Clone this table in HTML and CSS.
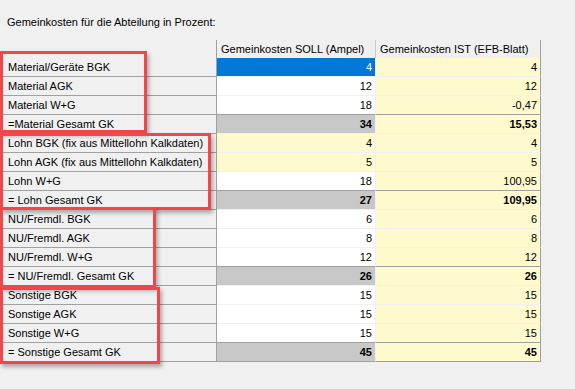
FILE: index.html
```html
<!DOCTYPE html>
<html>
<head>
  <meta charset="UTF-8">
  <title>Gemeinkosten</title>
  <link rel="stylesheet" href="styles.css">
</head>
<body>
  <p class="caption">Gemeinkosten für die Abteilung in Prozent:</p>

  <div class="grid">
    <div class="corner"></div>
    <div class="colhead">Gemeinkosten SOLL (Ampel)</div>
    <div class="colhead last">Gemeinkosten IST (EFB-Blatt)</div>

    <div class="rowhead">Material/Geräte BGK</div>
    <div class="cell selected">4</div>
    <div class="cell ist">4</div>
    <div class="rowhead">Material AGK</div>
    <div class="cell">12</div>
    <div class="cell ist">12</div>
    <div class="rowhead">Material W+G</div>
    <div class="cell pre">18</div>
    <div class="cell ist pre">-0,47</div>
    <div class="rowhead">=Material Gesamt GK</div>
    <div class="cell sum">34</div>
    <div class="cell ist sum">15,53</div>

    <div class="rowhead">Lohn BGK (fix aus Mittellohn Kalkdaten)</div>
    <div class="cell fixed">4</div>
    <div class="cell ist">4</div>
    <div class="rowhead">Lohn AGK (fix aus Mittellohn Kalkdaten)</div>
    <div class="cell fixed">5</div>
    <div class="cell ist">5</div>
    <div class="rowhead">Lohn W+G</div>
    <div class="cell pre">18</div>
    <div class="cell ist pre">100,95</div>
    <div class="rowhead">= Lohn Gesamt GK</div>
    <div class="cell sum">27</div>
    <div class="cell ist sum">109,95</div>

    <div class="rowhead">NU/Fremdl. BGK</div>
    <div class="cell">6</div>
    <div class="cell ist">6</div>
    <div class="rowhead">NU/Fremdl. AGK</div>
    <div class="cell">8</div>
    <div class="cell ist">8</div>
    <div class="rowhead">NU/Fremdl. W+G</div>
    <div class="cell pre">12</div>
    <div class="cell ist pre">12</div>
    <div class="rowhead">= NU/Fremdl. Gesamt GK</div>
    <div class="cell sum">26</div>
    <div class="cell ist sum">26</div>

    <div class="rowhead">Sonstige BGK</div>
    <div class="cell">15</div>
    <div class="cell ist">15</div>
    <div class="rowhead">Sonstige AGK</div>
    <div class="cell">15</div>
    <div class="cell ist">15</div>
    <div class="rowhead">Sonstige W+G</div>
    <div class="cell pre">15</div>
    <div class="cell ist pre">15</div>
    <div class="rowhead bottom">= Sonstige Gesamt GK</div>
    <div class="cell sum bottom">45</div>
    <div class="cell ist sum bottom">45</div>
  </div>

  <!-- markierte Gruppen -->
  <div class="mark mark-material"></div>
  <div class="mark mark-lohn"></div>
  <div class="mark mark-nu"></div>
  <div class="mark mark-sonst"></div>
</body>
</html>
```

FILE: styles.css
```css
body {
  margin: 0;
  background: #f0f0f0;
  font-family: "Liberation Sans", Arial, sans-serif;
  font-size: 11px;
  color: #000;
}
.caption {
  margin: 0;
  padding: 16px 0 0 7px;
  line-height: 13px;
}
.grid {
  display: grid;
  grid-template-columns: 214px 159px 165px;
  margin: 11px 0 0 3px;
  width: 538px;
}
.grid > div {
  box-sizing: border-box;
  white-space: nowrap;
  overflow: hidden;
}
.corner {
  height: 18px;
  border-right: 1px solid #a0a0a0;
}
.colhead {
  height: 18px;
  line-height: 18px;
  padding-left: 4px;
  border-right: 1px solid #c8c8c8;
}
.colhead.last { border-right-color: #a0a0a0; }
.rowhead {
  height: 19px;
  line-height: 17px;
  padding: 1px 0 0 5px;
  border-right: 1px solid #a0a0a0;
  border-bottom: 1px solid #a0a0a0;
}
.cell {
  height: 19px;
  line-height: 17px;
  padding: 1px 3px 0 0;
  text-align: right;
  background: #fff;
  border-right: 1px solid #f0f0f0;
  border-bottom: 1px solid #f0f0f0;
}
.cell.ist {
  background: #fffacd;
  border-right-color: #a0a0a0;
}
.cell.fixed { background: #fffacd; }
.cell.selected {
  background: #0078d7;
  color: #fff;
}
.cell.pre { border-bottom-color: #a0a0a0; }
.cell.sum {
  background: #c8c8c8;
  font-weight: bold;
}
.cell.ist.sum { background: #fffacd; }
.grid .bottom { border-bottom-color: #a0a0a0; }

.mark {
  position: absolute;
  left: 0;
  box-sizing: border-box;
  border: 3px solid #f2474a;
  box-shadow: 2px 3px 4px rgba(0, 0, 0, 0.3);
}
.mark-material { top: 51px; width: 147px; height: 82px; }
.mark-lohn { top: 133px; width: 211px; height: 77px; }
.mark-nu { top: 207px; width: 156px; height: 81px; }
.mark-sonst { top: 287px; width: 160px; height: 77px; }
```
